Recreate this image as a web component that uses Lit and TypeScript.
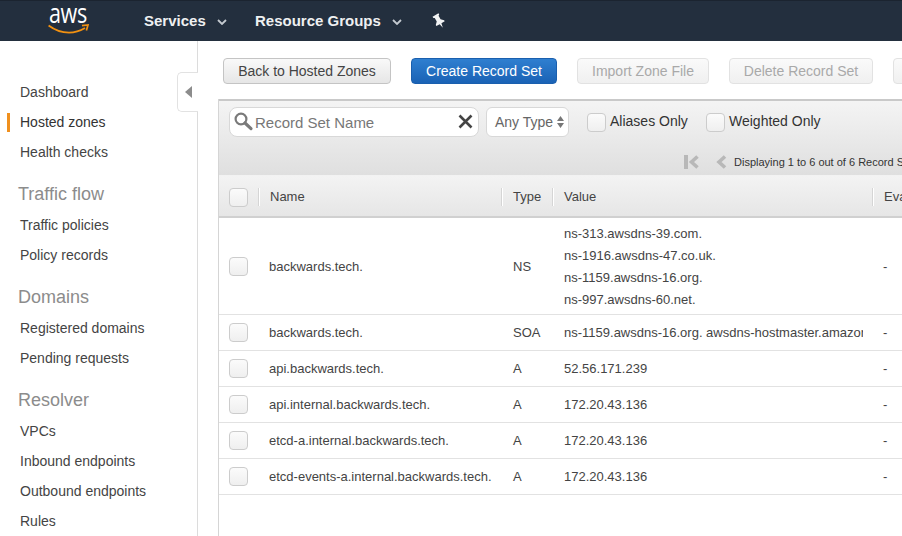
import { LitElement, html, css, svg } from "lit";
import { customElement } from "lit/decorators.js";

const nav = [
  { t: "Dashboard", k: "i" },
  { t: "Hosted zones", k: "a" },
  { t: "Health checks", k: "i" },
  { t: "Traffic flow", k: "h" },
  { t: "Traffic policies", k: "i" },
  { t: "Policy records", k: "i" },
  { t: "Domains", k: "h" },
  { t: "Registered domains", k: "i" },
  { t: "Pending requests", k: "i" },
  { t: "Resolver", k: "h" },
  { t: "VPCs", k: "i" },
  { t: "Inbound endpoints", k: "i" },
  { t: "Outbound endpoints", k: "i" },
  { t: "Rules", k: "i" },
];

const rows = [
  { n: "backwards.tech.", ty: "NS", v: ["ns-313.awsdns-39.com.", "ns-1916.awsdns-47.co.uk.", "ns-1159.awsdns-16.org.", "ns-997.awsdns-60.net."] },
  { n: "backwards.tech.", ty: "SOA", v: ["ns-1159.awsdns-16.org. awsdns-hostmaster.amazon.com. 1 7200 900 1209600 86400"] },
  { n: "api.backwards.tech.", ty: "A", v: ["52.56.171.239"] },
  { n: "api.internal.backwards.tech.", ty: "A", v: ["172.20.43.136"] },
  { n: "etcd-a.internal.backwards.tech.", ty: "A", v: ["172.20.43.136"] },
  { n: "etcd-events-a.internal.backwards.tech.", ty: "A", v: ["172.20.43.136"] },
];

const chev = svg`<path d="M1 1l4 4 4-4" fill="none" stroke="#c4cad0" stroke-width="1.8"/>`;

@customElement("app-root")
export class AppRoot extends LitElement {
  static styles = css`
    :host { display: block; width: 902px; height: 536px; overflow: hidden; font-family: "Liberation Sans", Arial, sans-serif; color: #444; background: #fff; position: relative; }
    .top { height: 41px; box-sizing: border-box; border-top: 1px solid #1b2430; background: #232f3e; display: flex; align-items: center; color: #fff; }
    .logo { width: 144px; flex: none; height: 40px; position: relative; }
    .aws { position: absolute; left: 49px; top: 3px; font: 400 22px/16px "Open Sans", sans-serif; color: #fff; letter-spacing: -0.4px; transform: scale(0.98, 1.25); transform-origin: 0 50%; }
    .smile { position: absolute; left: 48px; top: 22px; }
    .menu { font-size: 15px; font-weight: 700; color: #eef0f1; display: flex; align-items: center; margin-top: -1px; }
    .menu svg { margin-left: 11px; margin-top: 2px; }
    .m1 { width: 111px; }
    .m2 { width: 177px; }
    .body { display: flex; height: 495px; }
    .side { width: 198px; box-sizing: border-box; border-right: 1px solid #dcdcdc; flex: none; padding-top: 36px; position: relative; }
    .side a { display: block; font-size: 14px; line-height: 30px; height: 30px; padding-left: 20px; color: #444; }
    .side a.a { color: #333; position: relative; }
    .side a.a::before { content: ""; position: absolute; left: 7px; top: 6px; width: 3px; height: 19px; background: #f0901e; }
    .side .h { font-size: 18px; color: #8c8c8c; line-height: 26px; padding: 14px 0 3px 18px; }
    .tab { position: absolute; left: 177px; top: 31px; width: 21px; height: 40px; box-sizing: border-box; background: #fff; border: 1px solid #e2e2e2; border-right: 0; border-radius: 5px 0 0 5px; display: flex; align-items: center; justify-content: center; }
    .main { flex: 1; min-width: 0; padding: 17px 0 0 20px; overflow: hidden; }
    .btns { display: flex; gap: 20px; padding-left: 5px; height: 26px; width: 800px; }
    .btn { flex: none; height: 26px; box-sizing: border-box; border: 1px solid #c4c4c4; border-radius: 4px; background: linear-gradient(#f9f9f9, #e6e6e6); font-size: 14px; line-height: 24px; text-align: center; color: #444; }
    .b1 { width: 168px; }
    .b2 { width: 146px; background: linear-gradient(#2f7fd0, #1a62b5); border-color: #1a5fae; color: #fff; }
    .b3 { width: 132px; color: #a9a9a9; border-color: #e2e2e2; background: linear-gradient(#fafafa, #f0f0f0); }
    .b4 { width: 144px; color: #a9a9a9; border-color: #e2e2e2; background: linear-gradient(#fafafa, #f0f0f0); }
    .b5 { width: 60px; color: #a9a9a9; border-color: #e2e2e2; background: linear-gradient(#fafafa, #f0f0f0); }
    .panel { margin-top: 15px; width: 760px; height: 440px; border-left: 1px solid #d5d5d5; }
    .tools { height: 77px; box-sizing: border-box; border-top: 2px solid #c9c9c9; background: linear-gradient(#f4f4f4, #dfdfdf); border-bottom: 1px solid #f2f2f2; padding: 6px 0 0 10px; position: relative; }
    .filters { display: flex; align-items: flex-start; }
    .search { width: 250px; height: 30px; box-sizing: border-box; background: #fff; border: 1px solid #d8d8d8; border-radius: 8px; display: flex; align-items: center; position: relative; padding-left: 3px; }
    .search span { font-size: 15px; color: #777; margin-left: 1px; margin-top: 1px; flex: 1; }
    .mag { margin-top: -3px; }
    .clr { margin: -2px 5px 0 0; }
    .sel { margin-left: 7px; width: 83px; height: 30px; box-sizing: border-box; background: #fff; border: 1px solid #d8d8d8; border-radius: 6px; display: flex; align-items: center; padding-left: 8px; gap: 4px; font-size: 14px; color: #666; }
    .cbx { width: 19px; height: 19px; box-sizing: border-box; border: 1px solid #ccc; border-radius: 4px; background: linear-gradient(#fbfbfb, #efefef); flex: none; display: block; }
    .chk { display: flex; align-items: center; gap: 4px; font-size: 14px; color: #333; margin-top: 6px; }
    .chk b { font-weight: 400; margin-top: -3px; }
    .c1 { margin-left: 18px; width: 119px; }
    .pager { position: absolute; left: 464px; top: 53px; display: flex; align-items: center; font-size: 11px; color: #333; white-space: nowrap; }
    .pager svg { flex: none; }
    .pg2 { margin-left: 15px; }
    .pager span { margin-left: 7px; }
    .head { height: 42px; box-sizing: border-box; background: linear-gradient(#f3f3f3, #e6e6e6); border-bottom: 2px solid #d0d0d0; font-size: 13px; color: #444; display: grid; grid-template-columns: 40px 243px 51px 320px 60px; align-items: center; }
    .head div { height: 18px; line-height: 18px; border-left: 1px solid #fff; box-shadow: -1px 0 0 #d5d5d5; padding-left: 10px; white-space: nowrap; margin-top: 2px; }
    .head div.c0 { border: 0; box-shadow: none; padding-left: 10px; height: 19px; line-height: normal; }
    .row { display: grid; grid-template-columns: 40px 243px 51px 320px 60px; align-items: center; border-bottom: 1px solid #e2e2e2; font-size: 13px; color: #444; box-sizing: border-box; height: 36px; }
    .row.tall { height: 97px; }
    .row > div { padding-left: 10px; white-space: nowrap; overflow: hidden; }
    .row > .ty { padding-left: 11px; }
    .row .val { padding-left: 11px; margin-right: 10px; line-height: 22px; }
    .row.tall .val { padding-top: 2px; }
    .row .val div { overflow: hidden; }
  `;

  render() {
    return html`
      <div class="top">
        <div class="logo">
          <span class="aws">aws</span>
          <svg class="smile" width="42" height="12" viewBox="0 0 42 12">
            <path d="M.6 2.5C8 8 14 9.6 21 9.6c6 0 11-1.6 16-4.6" fill="none" stroke="#f29111" stroke-width="1.8"/>
            <path d="M34 2.6l6-.6-1.6 5.6" fill="none" stroke="#f29111" stroke-width="1.7"/>
          </svg>
        </div>
        <div class="menu m1">Services<svg width="10" height="6" viewBox="0 0 10 6">${chev}</svg></div>
        <div class="menu m2">Resource Groups<svg width="10" height="6" viewBox="0 0 10 6">${chev}</svg></div>
        <svg width="14" height="16" viewBox="0 0 14 16"><g transform="rotate(-30 7 8)"><path d="M3.6 1h6.8v1.6l-1.2.7v4l2.6 2.6v1.2H8l-1 4.6-1-4.6H2.200v-1.200l2.600-2.600v-4l-1.200-.7z" fill="#f2f3f4"/></g></svg>
      </div>
      <div class="body">
        <div class="side">
          ${nav.map((n) => n.k === "h"
            ? html`<div class="h">${n.t}</div>`
            : html`<a class="${n.k}">${n.t}</a>`)}
          <div class="tab"><svg width="7" height="12" viewBox="0 0 7 12"><path d="M7 0v12L0 6z" fill="#8c8c8c"/></svg></div>
        </div>
        <div class="main">
          <div class="btns">
            <div class="btn b1">Back to Hosted Zones</div>
            <div class="btn b2">Create Record Set</div>
            <div class="btn b3">Import Zone File</div>
            <div class="btn b4">Delete Record Set</div>
            <div class="btn b5"></div>
          </div>
          <div class="panel">
            <div class="tools">
              <div class="filters">
                <div class="search">
                  <svg class="mag" width="21" height="20" viewBox="0 0 21 20"><circle cx="8" cy="8" r="5.4" fill="none" stroke="#7a7a7a" stroke-width="2.2"/><path d="M12 12l6 5.600" stroke="#7a7a7a" stroke-width="3.200" stroke-linecap="round"/></svg>
                  <span>Record Set Name</span>
                  <svg class="clr" width="15" height="15" viewBox="0 0 15 15"><path d="M1.500 1.500l12 12M13.500 1.500l-12 12" stroke="#444" stroke-width="2.600"/></svg>
                </div>
                <div class="sel">Any Type<svg width="7" height="12" viewBox="0 0 7 12"><path d="M3.500 0L7 5H0zM3.500 12L0 7h7z" fill="#777"/></svg></div>
                <div class="chk c1"><i class="cbx"></i><b>Aliases Only</b></div>
                <div class="chk"><i class="cbx"></i><b>Weighted Only</b></div>
              </div>
              <div class="pager">
                <svg width="17" height="16" viewBox="0 0 17 16"><path d="M1 1h4v14H1z" fill="#b8b8b8"/><path d="M14.500 2.500L8.500 8l6 5.500" fill="none" stroke="#b8b8b8" stroke-width="3.600"/></svg>
                <svg class="pg2" width="12" height="16" viewBox="0 0 12 16"><path d="M10 2.500L4 8l6 5.500" fill="none" stroke="#b8b8b8" stroke-width="3.600"/></svg>
                <span>Displaying 1 to 6 out of 6 Record Sets</span>
              </div>
            </div>
            <div class="head">
              <div class="c0"><i class="cbx"></i></div>
              <div>Name</div><div>Type</div><div>Value</div><div>Evaluate Target Health</div>
            </div>
            ${rows.map((r) => html`
              <div class="row ${r.v.length > 1 ? "tall" : ""}">
                <div><i class="cbx"></i></div>
                <div>${r.n}</div>
                <div class="ty">${r.ty}</div>
                <div class="val">${r.v.map((x) => html`<div>${x}</div>`)}</div>
                <div>-</div>
              </div>`)}
          </div>
        </div>
      </div>
    `;
  }
}
